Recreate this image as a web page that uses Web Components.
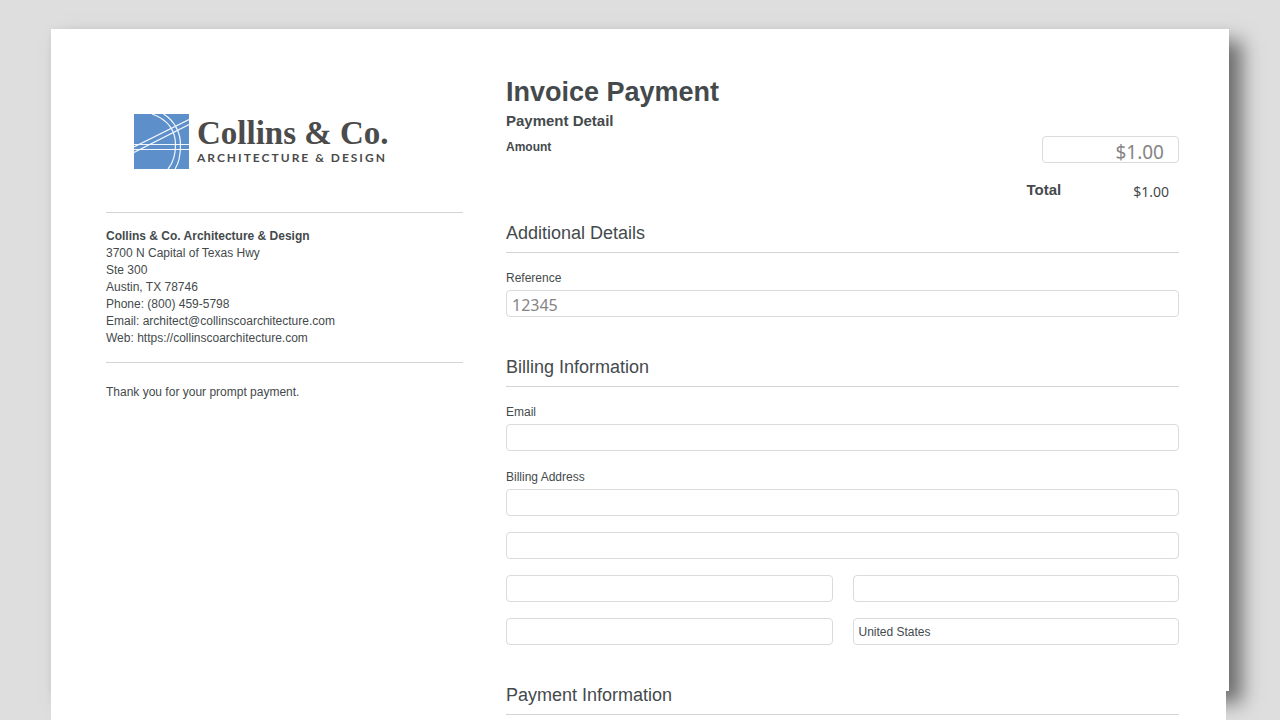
<!DOCTYPE html>
<html lang="en">
<head>
<meta charset="utf-8">
<title>Invoice Payment</title>
<style>
body{margin:0;background:#dedede;color:#444a4c;font:12px/16px "Liberation Sans",Arial,sans-serif}
payment-page{--rule:#d2d4d5}
</style>
</head>
<body>
<payment-page></payment-page>
<script>
const define = (name, html, setup) => customElements.define(name, class extends HTMLElement {
  constructor() {
    super();
    this.attachShadow({mode: "open"});
  }
  connectedCallback() {
    this.shadowRoot.innerHTML = html;
    if (setup) setup(this, this.shadowRoot);
  }
});

define("company-logo", `
<style>
:host{display:flex;gap:8px;color:#4b4b4b}
svg{width:55px;height:55px;flex:none}
.name{font:bold 33px/38px "Liberation Serif",serif;white-space:nowrap}
.tag{font:bold 12px/12px Lato,sans-serif;letter-spacing:2px;white-space:nowrap}
</style>
<svg viewBox="0 0 55 55" aria-hidden="true"><rect width="55" height="55" fill="#5d8fcb"/>
<g fill="none" stroke="#f1f7fd" stroke-width="1.2"><path d="M0 30.5H55M0 35.500H55M0 33L55 5.500M0 38.500L55 10.500M18 0C35 6 41.500 18 41.500 31C41.500 41 39 49 34 55M29.500 0C41 7 46.500 19 46.500 31C46.500 41 45 49 41 55"/></g></svg>
<div><div class="name">Collins &amp; Co.</div><div class="tag">ARCHITECTURE &amp; DESIGN</div></div>`);

define("company-card", `
<style>
:host{display:block}
company-logo{margin:0 0 43px 28px}
address{font-style:normal;line-height:17px;border:solid var(--rule);border-width:1px 0;padding:15px 0}
address div{overflow-wrap:anywhere}
a{color:inherit;text-decoration:none}
p{margin:21px 0 0}
</style>
<company-logo></company-logo>
<address><strong>Collins &amp; Co. Architecture &amp; Design</strong>
<div>3700 N Capital of Texas Hwy</div><div>Ste 300</div><div>Austin, TX 78746</div>
<div>Phone: (800) 459-5798</div>
<div>Email: <a href="mailto:architect@collinscoarchitecture.com">architect@collinscoarchitecture.com</a></div>
<div>Web: <a href="https://collinscoarchitecture.com">https://collinscoarchitecture.com</a></div></address>
<p>Thank you for your prompt payment.</p>`);

const control = `box-sizing:border-box;display:block;width:100%;height:27px;margin:0;padding:0 5px;border:1px solid #d9dbdc;border-radius:4px;background:#fff;color:inherit;font:inherit;appearance:none;outline:0`;

define("text-field", `
<style>
:host{display:block;min-width:0}
label{display:block;padding:2px 0 4px}
label:empty{display:none}
input{${control}}
input{color:#858585;font:16px/24px "Noto Sans",sans-serif;padding-top:2px}
</style>
<label for="f"></label><input id="f" type="text">`, (host, root) => {
  root.querySelector("label").textContent = host.getAttribute("label") || "";
  const input = root.querySelector("input");
  input.value = host.getAttribute("value") || "";
  if (host.hasAttribute("name")) input.setAttribute("aria-label", host.getAttribute("name"));
});

define("country-field", `
<style>
:host{display:block;min-width:0}
select{${control}}
</style>
<select aria-label="Country"><option>United States</option><option>Canada</option></select>`);

define("amount-summary", `
<style>
:host{display:block}
.row{display:flex;justify-content:space-between;align-items:flex-start}
label{font-weight:bold;line-height:22px}
input{${control}}
input{width:137px;text-align:right;color:#858585;font:19px/25px "Noto Sans",sans-serif;padding:4px 14px 0 5px}
.total{justify-content:flex-end;gap:72px;margin-top:17px;padding-right:10px;line-height:20px}
strong{font-size:15px}
output{font:14px/24px "Noto Sans",sans-serif}
</style>
<div class="row"><label for="amount">Amount</label><input id="amount" type="text" value="$1.00"></div>
<div class="row total"><strong>Total</strong><output for="amount">$1.00</output></div>`);

define("form-section", `
<style>
:host{display:block}
h3{margin:0 0 15px;padding-bottom:7px;border-bottom:1px solid var(--rule);font:18px/24px "Liberation Sans",Arial,sans-serif}
.fields{display:grid;gap:16px}
</style>
<h3></h3><div class="fields"><slot></slot></div>`, (host, root) => {
  root.querySelector("h3").textContent = host.getAttribute("heading");
});

define("payment-form", `
<style>
:host{display:block;min-width:0}
h1{margin:0;font-size:27px;line-height:32px}
h2{margin:3px 0 5px;font-size:15px;line-height:20px}
amount-summary{margin-bottom:17px}
form{display:grid;gap:38px}
.pair{display:grid;grid-template-columns:1fr 1fr;gap:16px 20px}
</style>
<h1>Invoice Payment</h1><h2>Payment Detail</h2>
<amount-summary></amount-summary>
<form>
<form-section heading="Additional Details"><text-field label="Reference" value="12345"></text-field></form-section>
<form-section heading="Billing Information">
<text-field label="Email"></text-field>
<text-field label="Billing Address"></text-field>
<text-field name="Address line 2"></text-field>
<div class="pair"><text-field name="City"></text-field><text-field name="State"></text-field><text-field name="Postal code"></text-field><country-field></country-field></div>
</form-section>
<form-section heading="Payment Information"></form-section>
</form>`);

define("payment-page", `
<style>
:host{display:flex;box-sizing:border-box;min-height:100vh;padding:29px 54px 0 51px;overflow:hidden}
main{flex:1;min-width:0;position:relative;z-index:0;display:grid;grid-template-columns:357fr 673fr;column-gap:43px;padding:47px 47px 0 55px}
.sheet{position:absolute;z-index:-1;inset:0 -3px 39px 0;background:#fff;box-shadow:13px 12px 18px rgba(0,0,0,.5),0 0 6px rgba(0,0,0,.04)}
.base{position:absolute;z-index:-1;inset:0;background:#fff}
company-card{padding-top:38px;min-width:0}
</style>
<main><div class="sheet"></div><div class="base"></div><company-card></company-card><payment-form></payment-form></main>`);
</script>
</body>
</html>
